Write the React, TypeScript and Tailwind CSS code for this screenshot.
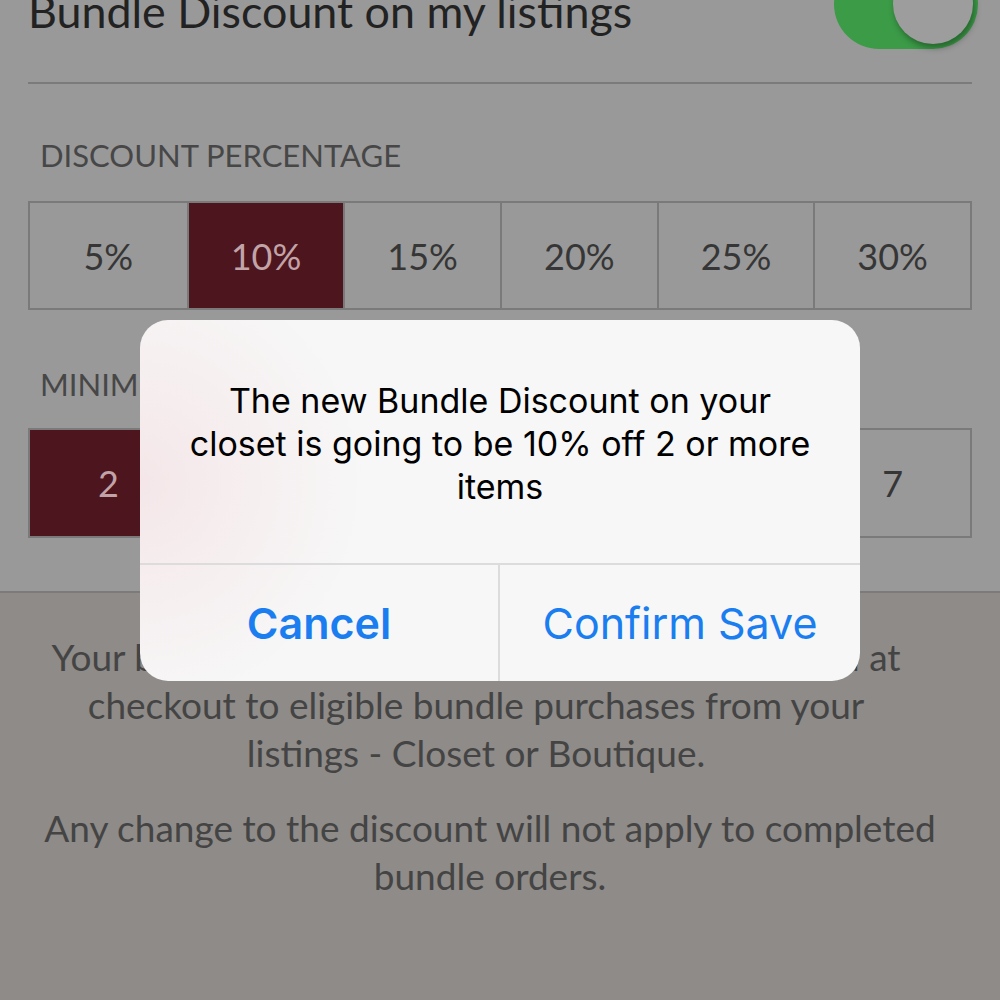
import React from 'react';

const percents = ['5%', '10%', '15%', '20%', '25%', '30%'];
const counts = ['2', '3', '4', '5', '6', '7'];

function OptionGrid({ items, selected, height }: { items: string[]; selected: string; height: string }) {
  return (
    <div className={`grid grid-cols-6 border-2 border-[#7a7a7a] ${height}`}>
      {items.map((item, i) => (
        <div
          key={item}
          className={`flex items-center justify-center text-[36px] ${i > 0 ? 'border-l-2 border-[#7a7a7a]' : ''} ${
            item === selected ? 'bg-[#4d151e] text-[#c2a3a8]' : 'text-[#363636]'
          }`}
        >
          {item}
        </div>
      ))}
    </div>
  );
}

export default function App() {
  return (
    <div className="relative w-[1000px] h-[1000px] overflow-hidden bg-[#8e8b88] font-['Lato',sans-serif]">
      {/* settings section (dimmed) */}
      <div className="bg-[#999999] px-[28px] -mt-[60px] pb-[53px]">
        <div className="flex items-center justify-between h-[144px] border-b-2 border-[#7b7b7b]">
          <span className="text-[44.8px] leading-none text-[#222]">Bundle Discount on my listings</span>
          <div className="relative w-[144px] h-[90px] mr-[-6px] mt-[-14px] rounded-full bg-[#3b9b47]">
            <div className="absolute right-[5px] top-[5px] w-[80px] h-[80px] rounded-full bg-[#9d9d9d] shadow-[2px_4px_6px_rgba(0,0,0,0.35)]" />
          </div>
        </div>
        <div className="pt-[56px] pb-[30px] pl-[12px] text-[31px] text-[#474747] leading-none">DISCOUNT PERCENTAGE</div>
        <OptionGrid items={percents} selected="10%" height="h-[109px]" />
        <div className="pt-[59px] pb-[28px] pl-[12px] text-[31px] text-[#474747] leading-none">MINIMUM ITEMS IN BUNDLE</div>
        <OptionGrid items={counts} selected="2" height="h-[110px]" />
      </div>

      <div className="border-t-2 border-[#7d7b79] px-[30px] pt-[40px] text-center text-[37px] leading-[48px] text-[#444]">
        <p className="pr-[48px]">
          Your bundle discount will be automatically applied at
          <br />
          checkout to eligible bundle purchases from your
          <br />
          listings - Closet or Boutique.
        </p>
        <p className="mt-[27px] pr-[20px]">
          Any change to the discount will not apply to completed
          <br />
          bundle orders.
        </p>
      </div>

      {/* alert */}
      <div className="absolute left-[140px] top-[320px] w-[720px] rounded-[28px] overflow-hidden bg-[#f7f7f7] bg-[radial-gradient(circle_at_0%_45%,rgba(240,200,205,0.35),transparent_30%)] font-['Inter',sans-serif]">
        <div className="h-[243px] px-[30px] pt-[59px] text-center text-[34px] leading-[43px] text-black">
          The new Bundle Discount on your
          <br />
          closet is going to be 10% off 2 or more
          <br />
          items
        </div>
        <div className="grid grid-cols-2 h-[118px] border-t-2 border-[#dcdcdc]">
          <button className="flex items-center justify-center text-[43px] font-semibold text-[#1a7ef0] border-r-2 border-[#dcdcdc]">Cancel</button>
          <button className="flex items-center justify-center text-[43px] text-[#1a7ef0]">Confirm Save</button>
        </div>
      </div>
    </div>
  );
}
